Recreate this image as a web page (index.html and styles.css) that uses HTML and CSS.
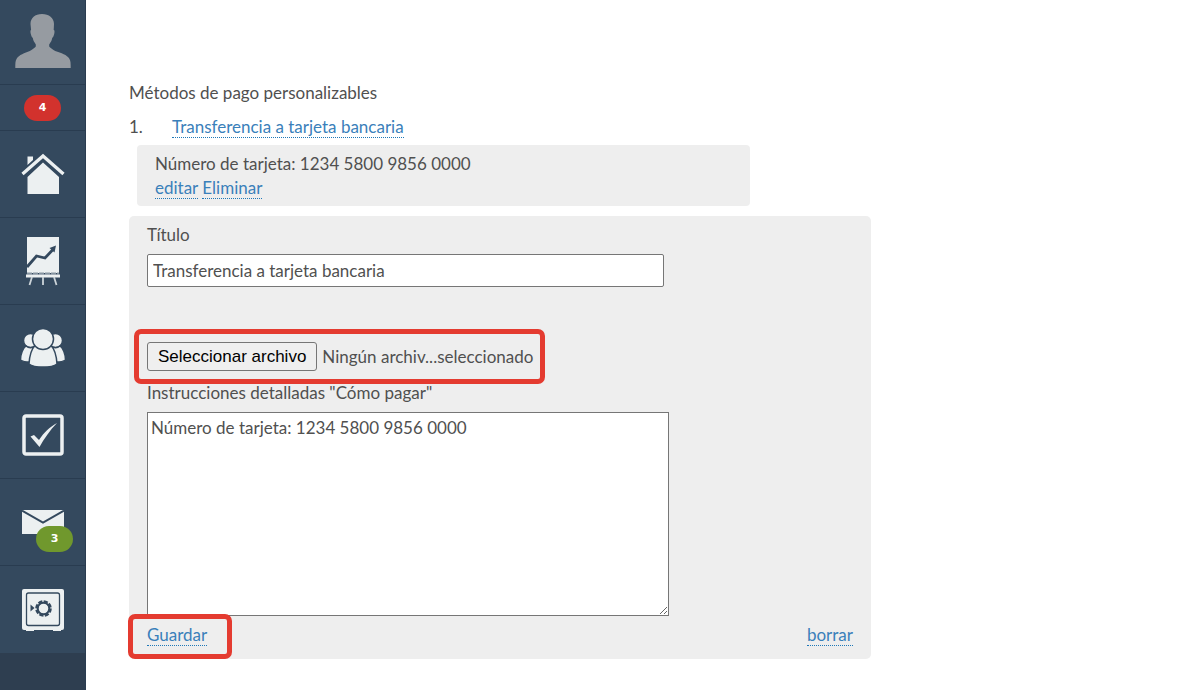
FILE: index.html
```html
<!DOCTYPE html>
<html lang="es">
<head>
  <meta charset="UTF-8">
  <meta name="viewport" content="width=device-width, initial-scale=1.0">
  <title>Métodos de pago personalizables</title>
  <link rel="stylesheet" href="styles.css">
</head>
<body>

  <!-- Sidebar -->
  <nav class="sidebar">
    <a href="#" class="nav-item nav-user" aria-label="Perfil">
      <svg width="56" height="56" viewBox="0 0 56 56" fill="#969ba1">
        <path d="M27 0c7 0 12 4 12 10l-.3 6c1 0 1 2 .5 4s-1 3-2 4c-.5 3-1.500 4-3 6.500v2c1 1 3 3 6 4.500 6 2 12 4 14 7.500 1.500 2 1.500 5 1.500 9.500H.3c0-4.500 0-7.500 1.500-9.500 2-3.500 8-5.500 13-7.500 3-1.500 5-3.500 6-4.500v-2c-1.500-2.500-2.500-3.500-3-6.500-1-1-1.500-2-2-4s-.5-4 .3-4L15.500 10C15.500 4 20 0 27 0z"/>
      </svg>
    </a>
    <a href="#" class="nav-item nav-alerts"><span class="badge badge-red">4</span></a>
    <a href="#" class="nav-item" aria-label="Inicio">
      <svg width="44" height="42" viewBox="0 0 44 42" fill="#ecf0f1">
        <path d="M6.500 3.500H12V7l-5.500 5zM22 9.500 38 24v17H6.500V24z"/>
        <path d="M1.500 21 22 3l20.500 18" fill="none" stroke="#34495e" stroke-width="6"/>
        <path d="M1.500 21 22 3l20.500 18" fill="none" stroke="#ecf0f1" stroke-width="3.300"/>
      </svg>
    </a>
    <a href="#" class="nav-item" aria-label="Estadísticas">
      <svg width="36" height="50" viewBox="0 0 36 50">
        <path d="M2 1h32v36H2z" fill="#ecf0f1"/>
        <path d="M2 31 11.500 20 20 22 28 13.500" fill="none" stroke="#34495e" stroke-width="2.800"/>
        <path d="m24.500 12 6.500-2.500-1.500 7z" fill="#34495e"/>
        <path d="M2 37.500h32" stroke="#8795a1" stroke-width="2" stroke-dasharray="5 1"/>
        <path d="M1 38.500h34v3H1z" fill="#ecf0f1"/>
        <path d="M7 41 4.500 49M18 41v8M29 41l2.500 8" stroke="#ccd4d9" stroke-width="1.800"/>
      </svg>
    </a>
    <a href="#" class="nav-item" aria-label="Usuarios">
      <svg width="46" height="40" viewBox="0 0 46 40" fill="#ecf0f1" stroke="#34495e" stroke-width="1.500">
        <circle cx="10.500" cy="12.500" r="7"/>
        <circle cx="35.500" cy="12.500" r="7"/>
        <path d="M6 18C3 20 .5 26 .5 32c3 2 6 2 9 2l6-16c-3 2-7 2-9.500 0zM40 18c3 2 5.500 8 5.500 14-3 2-6 2-9 2l-6-16c3 2 7 2 9.500 0z"/>
        <path d="M15 17.500C11.500 21 9.500 28 9 36c5 4 23 4 28 0-.5-8-2.500-15-6-18.500-4 4-12 4-16 0z"/>
        <circle cx="23" cy="11" r="10.500"/>
      </svg>
    </a>
    <a href="#" class="nav-item" aria-label="Tareas">
      <svg width="42" height="42" viewBox="0 0 42 42">
        <rect x="2" y="2" width="38" height="38" rx="2" fill="none" stroke="#ecf0f1" stroke-width="3.500"/>
        <path d="M8.500 22.500 12 21l5 5C22 18 28 13 35 9 28 16 22 25 17.500 33z" fill="#ecf0f1"/>
      </svg>
    </a>
    <a href="#" class="nav-item" aria-label="Mensajes">
      <svg width="42" height="26" viewBox="0 0 42 26">
        <path d="M0 1h42v24H0z" fill="#ecf0f1"/>
        <path d="M0 1.500 21 13.500 42 1.500" fill="none" stroke="#34495e" stroke-width="2"/>
      </svg>
      <span class="badge badge-green">3</span>
    </a>
    <a href="#" class="nav-item" aria-label="Finanzas">
      <svg width="42" height="44" viewBox="0 0 42 44">
        <rect x="0" y="1" width="42" height="41" rx="2" fill="#ecf0f1"/>
        <path d="M4 41h8v2H4zM31 41h8v2h-8z" fill="#ecf0f1"/>
        <rect x="4.500" y="5" width="33" height="32.500" rx="2" fill="none" stroke="#34495e" stroke-width="1.300"/>
        <path d="m8.500 16.500 4 3.500-4 3.500z" fill="#34495e"/>
        <circle cx="21.500" cy="20.500" r="5.800" fill="none" stroke="#34495e" stroke-width="2"/>
        <circle cx="21.500" cy="20.500" r="6.800" fill="none" stroke="#34495e" stroke-width="3" stroke-dasharray="4 1.340"/>
      </svg>
    </a>
  </nav>

  <main class="content">
    <h1>Métodos de pago personalizables</h1>

    <div class="method">
      <span class="method-number">1.</span>
      <span><a href="#" class="link">Transferencia a tarjeta bancaria</a></span>
    </div>
    <div class="method-info">
      <p>Número de tarjeta: 1234 5800 9856 0000</p>
      <p><a href="#" class="link">editar</a> <a href="#" class="link">Eliminar</a></p>
    </div>

    <form class="edit-form">
      <label for="title">Título</label>
      <input type="text" id="title" class="title-input" value="Transferencia a tarjeta bancaria">

      <div class="file-row highlight">
        <input type="file" id="file" class="file-input">
        <label for="file" class="file-button">Seleccionar archivo</label>
        <span>Ningún archiv...seleccionado</span>
      </div>

      <label for="details">Instrucciones detalladas "Cómo pagar"</label>
      <textarea id="details" class="details">Número de tarjeta: 1234 5800 9856 0000</textarea>

      <div class="form-actions">
        <span class="save highlight"><a href="#" class="link">Guardar</a></span>
        <span><a href="#" class="link">borrar</a></span>
      </div>
    </form>
  </main>

</body>
</html>
```
FILE: styles.css
```css
* {
  box-sizing: border-box;
}

body {
  margin: 0;
  display: flex;
  min-height: 100vh;
  background: #fff;
  color: #505050;
  font-family: Lato, sans-serif;
  font-size: 17px;
  line-height: 24px;
}

/* Sidebar */
.sidebar {
  flex: none;
  width: 86px;
  background: #2e3e50;
  border-right: 1px solid #2a3c50;
}

.nav-item {
  position: relative;
  display: flex;
  align-items: center;
  justify-content: center;
  height: 87px;
  background: #34495e;
  border-bottom: 1px solid #293c50;
  text-decoration: none;
}

.nav-user {
  height: 85px;
}

.nav-alerts {
  height: 46px;
}

.nav-item:last-child {
  border-bottom: none;
}

.badge {
  width: 37px;
  border-radius: 13px;
  color: #fff;
  font-family: "DejaVu Sans", sans-serif;
  font-size: 11px;
  font-weight: 700;
  line-height: 26px;
  text-align: center;
}

.badge-red {
  background: #d2322d;
}

.badge-green {
  position: absolute;
  right: 12px;
  bottom: 13px;
  background: #70982d;
}

/* Content */
.content {
  flex: 1;
  padding: 81px 0 24px 43px;
}

h1 {
  margin: 0 0 10px;
  font-size: 17px;
  font-weight: 400;
}

p {
  margin: 0;
}

.link {
  color: #3a80ba;
  text-decoration: none;
  border-bottom: 1px dotted #1f78b8;
}

.method {
  display: flex;
}

.method-number {
  width: 43px;
}

.method-info {
  max-width: 613px;
  margin: 6px 0 10px 8px;
  padding: 7px 18px 6px;
  background: #eee;
  border-radius: 4px;
}

.edit-form {
  display: flex;
  flex-direction: column;
  align-items: flex-start;
  max-width: 742px;
  padding: 7px 18px 12px;
  background: #eee;
  border-radius: 5px;
}

.title-input,
.details {
  width: 100%;
  margin: 7px 0;
  border: 1px solid #767676;
  background: #fff;
  color: #505050;
  font: inherit;
}

.title-input {
  max-width: 517px;
  height: 33px;
  padding: 0 5px;
  border-radius: 2px;
}

.details {
  max-width: 522px;
  height: 204px;
  padding: 3px;
}

.file-row {
  display: flex;
  align-items: center;
  gap: 5px;
  margin: 48px 0 10px;
}

.file-input {
  position: absolute;
  width: 1px;
  height: 1px;
  opacity: 0;
}

.file-button {
  padding: 0 10px;
  border: 1px solid #767676;
  border-radius: 3px;
  background: #efefef;
  color: #000;
  font-family: "Liberation Sans", Arial, sans-serif;
  line-height: 27px;
}

.form-actions {
  display: flex;
  justify-content: space-between;
  align-self: stretch;
}

/* Red frames around the important controls */
.highlight {
  position: relative;
}

.highlight::after {
  content: "";
  position: absolute;
  inset: -13px -12px -13px -13px;
  border: 5px solid #e43b30;
  border-radius: 7px;
  pointer-events: none;
}

.save::after {
  inset: -9px -25px -12px -19px;
}
```
